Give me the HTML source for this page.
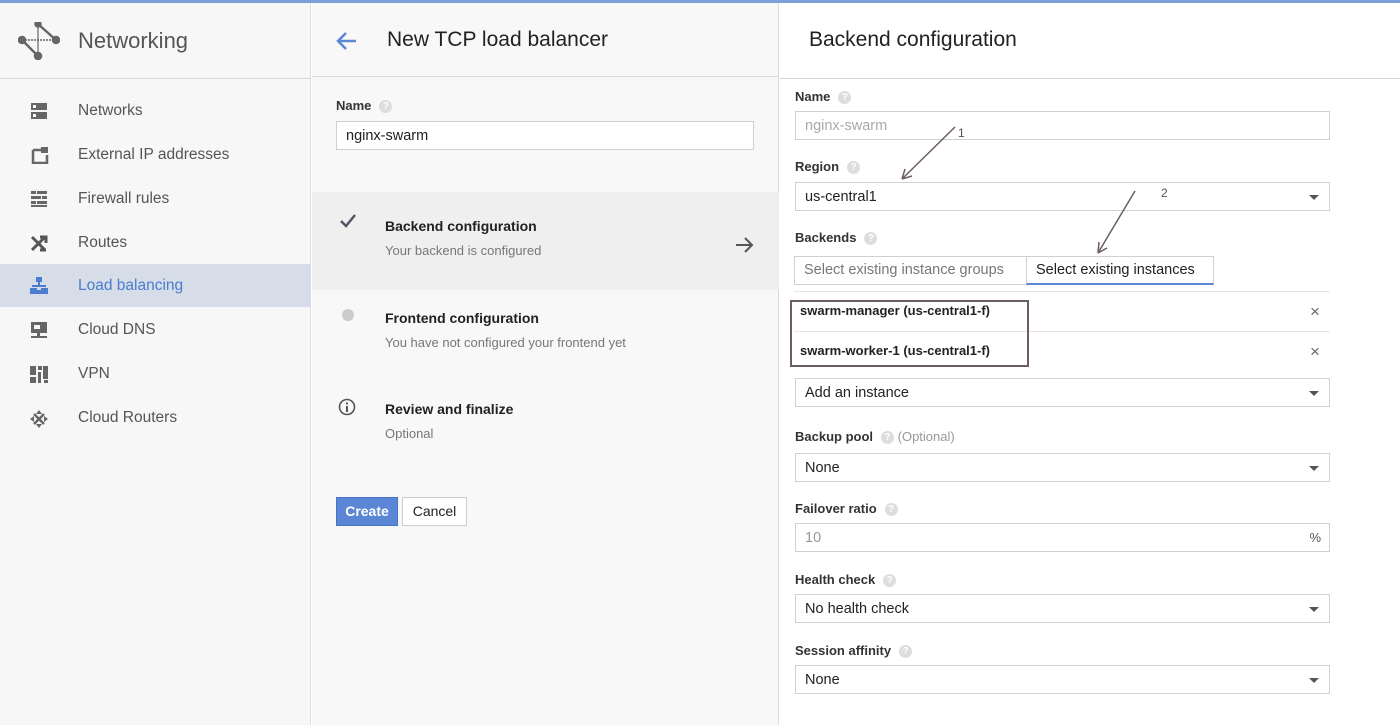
<!DOCTYPE html>
<html><head><meta charset="utf-8"><style>
*{margin:0;padding:0;box-sizing:border-box}
body{width:1400px;height:725px;overflow:hidden;background:#fff;font-family:"Liberation Sans",Arial,sans-serif;position:relative;color:#212121}
.a{position:absolute}
.t{position:absolute;white-space:nowrap}
.nav{font-size:15.5px;color:#555;left:78px}
.lbl{font-size:13px;font-weight:bold;color:#333;left:795px}
.box{position:absolute;border:1px solid #d0d0d0;background:#fff;left:795px;width:535px;height:29px;font-size:14.5px;padding:6px 9px;color:#222}
.box .dd{position:absolute;right:10px;top:12px;width:0;height:0;border-left:5px solid transparent;border-right:5px solid transparent;border-top:5px solid #555}
.q{display:inline-block;width:13px;height:13px;border-radius:50%;background:#ddd;color:#fff;font-size:10px;text-align:center;line-height:13px;vertical-align:middle;margin-left:8px;font-weight:bold}
</style></head><body>
<div class="a" style="left:0;top:0;width:1400px;height:3px;background:#7f9fd8"></div>
<!-- left panel -->
<div class="a" style="left:0;top:3px;width:311px;height:722px;background:#f7f7f7;border-right:1px solid #dcdcdc"></div>
<div class="a" style="left:0;top:78px;width:311px;height:1px;background:#d8d8d8"></div>
<svg class="a" style="left:18px;top:22px" width="42" height="38" viewBox="0 0 42 38"><g stroke="#666" stroke-width="2.5" fill="#666"><line x1="4" y1="18" x2="38" y2="18" stroke-dasharray="2 1" stroke-width="1.5"/><line x1="20" y1="2" x2="38" y2="18"/><line x1="20" y1="34" x2="4" y2="18"/><line x1="20" y1="2" x2="20" y2="34" stroke-width="1.2"/><circle cx="4" cy="18" r="3"/><circle cx="38" cy="18" r="3"/><circle cx="20" cy="2" r="2.5"/><circle cx="20" cy="34" r="3"/></g></svg>
<div class="t" style="left:78px;top:28px;font-size:22px;color:#555">Networking</div>
<div class="a" style="left:0;top:264px;width:311px;height:43px;background:#d7dde8"></div>
<svg class="a" style="left:30px;top:102px" width="18" height="18"><rect x="1" y="1" width="16" height="7" fill="#666"/><rect x="1" y="10" width="16" height="7" fill="#666"/><rect x="3" y="3" width="3" height="3" fill="#f7f7f7"/><rect x="3" y="12" width="3" height="3" fill="#f7f7f7"/></svg>
<div class="t nav" style="top:102px">Networks</div>
<svg class="a" style="left:31px;top:146px" width="18" height="18"><path d="M2 4h8M2 4v13h14v-8" stroke="#666" stroke-width="2.5" fill="none"/><rect x="10" y="1" width="7" height="6" fill="#666"/></svg>
<div class="t nav" style="top:146px">External IP addresses</div>
<svg class="a" style="left:30px;top:190px" width="18" height="18"><g fill="#666"><rect x="1" y="1" width="16" height="3"/><rect x="1" y="6" width="16" height="3"/><rect x="1" y="11" width="16" height="3"/><rect x="1" y="15" width="16" height="2"/></g><g fill="#f7f7f7"><rect x="6" y="1" width="1" height="3"/><rect x="11" y="6" width="1" height="3"/><rect x="6" y="11" width="1" height="3"/></g></svg>
<div class="t nav" style="top:190px">Firewall rules</div>
<svg class="a" style="left:30px;top:234px" width="18" height="18"><path d="M2 3l13 13M2 16l13-13M10 3h6v6M10 16h6" stroke="#555" stroke-width="3" fill="none"/></svg>
<div class="t nav" style="top:234px">Routes</div>
<svg class="a" style="left:30px;top:277px" width="18" height="18"><g fill="#4a7ccf"><rect x="6" y="0" width="6" height="5"/><rect x="8" y="5" width="2" height="4"/><rect x="2" y="8" width="14" height="2"/><rect x="0" y="11" width="7" height="6"/><rect x="11" y="11" width="7" height="6"/><rect x="7" y="13" width="4" height="4"/></g></svg>
<div class="t nav" style="top:277px;color:#4a7ccf">Load balancing</div>
<svg class="a" style="left:30px;top:321px" width="18" height="18"><rect x="1" y="1" width="16" height="11" fill="#666"/><rect x="7" y="12" width="3" height="3" fill="#666"/><rect x="1" y="15" width="16" height="2" fill="#666"/><rect x="4" y="4" width="6" height="4" fill="#f7f7f7"/></svg>
<div class="t nav" style="top:321px">Cloud DNS</div>
<svg class="a" style="left:29px;top:365px" width="20" height="20"><g fill="#666"><rect x="1" y="1" width="6" height="9"/><rect x="1" y="12" width="6" height="6"/><rect x="9" y="1" width="4" height="4"/><rect x="9" y="7" width="3" height="11"/><rect x="14" y="1" width="5" height="13"/><rect x="15" y="15" width="4" height="3"/></g></svg>
<div class="t nav" style="top:365px">VPN</div>
<svg class="a" style="left:29px;top:409px" width="20" height="20"><path d="M10 1l3 4h-6zM10 19l3-4h-6zM1 10l4-3v6zM19 10l-4-3v6z" fill="#666"/><path d="M5 5l10 10M15 5L5 15" stroke="#666" stroke-width="2.5"/></svg>
<div class="t nav" style="top:409px">Cloud Routers</div>
<!-- middle -->
<div class="a" style="left:312px;top:3px;width:467px;height:722px;background:#f8f8f8;border-right:1px solid #dcdcdc"></div>
<div class="a" style="left:312px;top:76px;width:467px;height:1px;background:#d8d8d8"></div>
<svg class="a" style="left:334px;top:30px" width="24" height="22"><path d="M22 11H4M12 3l-8 8 8 8" stroke="#5b86d6" stroke-width="2.5" fill="none"/></svg>
<div class="t" style="left:387px;top:28px;font-size:21px;color:#222">New TCP load balancer</div>
<div class="t" style="left:336px;top:98px;font-size:13px;font-weight:bold;color:#333">Name<span class="q">?</span></div>
<div class="a" style="left:336px;top:121px;width:418px;height:29px;border:1px solid #d0d0d0;background:#fff;font-size:14.5px;padding:6px 9px">nginx-swarm</div>
<div class="a" style="left:312px;top:192px;width:467px;height:98px;background:#efefef"></div>
<svg class="a" style="left:339px;top:213px" width="18" height="16"><path d="M2 8l5 5 9-11" stroke="#556" stroke-width="2.5" fill="none"/></svg>
<div class="t" style="left:385px;top:218px;font-size:14px;font-weight:bold">Backend configuration</div>
<div class="t" style="left:385px;top:243px;font-size:13px;color:#777">Your backend is configured</div>
<svg class="a" style="left:735px;top:236px" width="20" height="18"><path d="M1 9h16M10 2l7 7-7 7" stroke="#555" stroke-width="2" fill="none"/></svg>
<div class="a" style="left:342px;top:309px;width:12px;height:12px;border-radius:50%;background:#ccc"></div>
<div class="t" style="left:385px;top:310px;font-size:14px;font-weight:bold">Frontend configuration</div>
<div class="t" style="left:385px;top:335px;font-size:13px;color:#777">You have not configured your frontend yet</div>
<svg class="a" style="left:338px;top:398px" width="18" height="18"><circle cx="9" cy="9" r="7.5" stroke="#555" stroke-width="1.6" fill="none"/><rect x="8" y="8" width="2" height="6" fill="#555"/><rect x="8" y="4.5" width="2" height="2" fill="#555"/></svg>
<div class="t" style="left:385px;top:401px;font-size:14px;font-weight:bold">Review and finalize</div>
<div class="t" style="left:385px;top:426px;font-size:13px;color:#777">Optional</div>
<div class="a" style="left:336px;top:497px;width:62px;height:29px;background:#5b86d6;border:1px solid #4a74c4;color:#fff;font-size:14px;font-weight:bold;text-align:center;line-height:27px">Create</div>
<div class="a" style="left:402px;top:497px;width:65px;height:29px;background:#fff;border:1px solid #ccc;color:#222;font-size:14px;text-align:center;line-height:27px">Cancel</div>
<!-- right -->
<div class="a" style="left:780px;top:78px;width:620px;height:1px;background:#d8d8d8"></div>
<div class="t" style="left:809px;top:28px;font-size:21px;color:#222">Backend configuration</div>
<div class="t lbl" style="top:89px">Name<span class="q">?</span></div>
<div class="box" style="top:111px;color:#aaa;width:535px">nginx-swarm</div>
<div class="t lbl" style="top:159px">Region<span class="q">?</span></div>
<div class="box" style="top:182px">us-central1<div class="dd"></div></div>
<div class="t lbl" style="top:230px">Backends<span class="q">?</span></div>
<div class="a" style="left:794px;top:256px;width:233px;height:29px;border:1px solid #d0d0d0;font-size:14.5px;color:#777;padding:5px 9px">Select existing instance groups</div>
<div class="a" style="left:1026px;top:256px;width:188px;height:29px;border:1px solid #d0d0d0;border-bottom:2px solid #5b86d6;font-size:14.5px;color:#222;padding:5px 9px">Select existing instances</div>
<div class="a" style="left:794px;top:291px;width:536px;height:1px;background:#e4e4e4"></div>
<div class="t" style="left:800px;top:303px;font-size:13px;font-weight:bold;color:#222">swarm-manager (us-central1-f)</div>
<div class="a" style="left:794px;top:331px;width:536px;height:1px;background:#e4e4e4"></div>
<div class="t" style="left:800px;top:343px;font-size:13px;font-weight:bold;color:#222">swarm-worker-1 (us-central1-f)</div>
<div class="a" style="left:790px;top:300px;width:239px;height:67px;border:2px solid #6d5e5e"></div>
<div class="t" style="left:1310px;top:302px;font-size:17px;color:#666">×</div>
<div class="t" style="left:1310px;top:342px;font-size:17px;color:#666">×</div>
<div class="box" style="top:378px">Add an instance<div class="dd"></div></div>
<div class="t lbl" style="top:429px">Backup pool<span class="q">?</span> <span style="font-weight:normal;color:#999">(Optional)</span></div>
<div class="box" style="top:453px">None<div class="dd"></div></div>
<div class="t lbl" style="top:501px">Failover ratio<span class="q">?</span></div>
<div class="box" style="top:523px;color:#999">10<span style="position:absolute;right:8px;top:6px;font-size:13px;color:#555">%</span></div>
<div class="t lbl" style="top:572px">Health check<span class="q">?</span></div>
<div class="box" style="top:594px">No health check<div class="dd"></div></div>
<div class="t lbl" style="top:643px">Session affinity<span class="q">?</span></div>
<div class="box" style="top:665px">None<div class="dd"></div></div>
<!-- annotation arrows -->
<svg class="a" style="left:880px;top:120px" width="300" height="145"><g stroke="#6d5e5e" stroke-width="1.5" fill="none"><line x1="75" y1="7" x2="22" y2="59"/><path d="M22 59l3-10M22 59l10-3"/><line x1="255" y1="71" x2="218" y2="133"/><path d="M218 133l1-11M218 133l9-5"/></g><text x="78" y="17" font-size="12" fill="#555" font-family="Liberation Sans">1</text><text x="281" y="77" font-size="12" fill="#555" font-family="Liberation Sans">2</text></svg>
</body></html>
